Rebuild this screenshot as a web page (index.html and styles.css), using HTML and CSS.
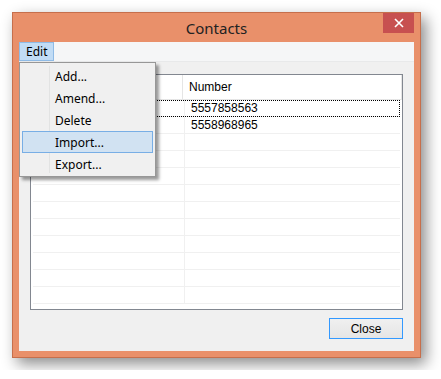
FILE: index.html
```html
<!DOCTYPE html>
<html lang="en">
<head>
  <meta charset="UTF-8" />
  <title>Contacts</title>
  <link rel="stylesheet" href="styles.css">
</head>
<body>

  <div class="window">
    <div class="titlebar">
      <span class="title">Contacts</span>
      <button class="close-btn">
        <svg width="10" height="10" viewBox="0 0 10 10"><path d="M1 1 L9 9 M9 1 L1 9" stroke="#fff" stroke-width="1.6"/></svg>
      </button>
    </div>

    <div class="client">
      <div class="menubar">
        <span class="menu-item open">Edit</span>
      </div>

      <div class="content">
        <div class="listview">
          <div class="lv-header">
            <div class="col col-name"></div>
            <div class="col col-number">Number</div>
          </div>
          <div class="lv-rows">
            <div class="row focused"><div class="col col-name"></div><div class="col col-number">5557858563</div></div>
            <div class="row"><div class="col col-name"></div><div class="col col-number">5558968965</div></div>
            <div class="row"><div class="col col-name"></div><div class="col col-number"></div></div>
            <div class="row"><div class="col col-name"></div><div class="col col-number"></div></div>
            <div class="row"><div class="col col-name"></div><div class="col col-number"></div></div>
            <div class="row"><div class="col col-name"></div><div class="col col-number"></div></div>
            <div class="row"><div class="col col-name"></div><div class="col col-number"></div></div>
            <div class="row"><div class="col col-name"></div><div class="col col-number"></div></div>
            <div class="row"><div class="col col-name"></div><div class="col col-number"></div></div>
            <div class="row"><div class="col col-name"></div><div class="col col-number"></div></div>
            <div class="row"><div class="col col-name"></div><div class="col col-number"></div></div>
            <div class="row"><div class="col col-name"></div><div class="col col-number"></div></div>
          </div>
        </div>

        <div class="buttons">
          <button class="btn default">Close</button>
        </div>
      </div>

      <!-- dropdown of the Edit menu -->
      <div class="dropdown">
        <div class="dd-item">Add...</div>
        <div class="dd-item">Amend...</div>
        <div class="dd-item">Delete</div>
        <div class="dd-item hot">Import...</div>
        <div class="dd-item">Export...</div>
      </div>
    </div>
  </div>

</body>
</html>
```

FILE: styles.css
```css
body {
  margin: 0;
  padding: 12px;
  background-color: #ffffff;
  font-family: 'Noto Sans', sans-serif;
}

.window {
  width: 409px;
  height: 346px;
  box-sizing: border-box;
  border: 1px solid #c66f4c;
  background-color: #e9906a;
  box-shadow: 5px 6px 14px rgba(0, 0, 0, 0.45);
  display: flex;
  flex-direction: column;
  padding: 0 6px 6px 6px;
}

.titlebar {
  height: 29px;
  position: relative;
  display: flex;
  align-items: center;
  justify-content: center;
}

.title {
  font-size: 15px;
  color: #222;
  margin-top: 1px;
}

.close-btn {
  position: absolute;
  top: 0;
  right: 0;
  width: 31px;
  height: 20px;
  border: none;
  padding: 0;
  background-color: #c75050;
  display: flex;
  align-items: center;
  justify-content: center;
}

.client {
  flex: 1;
  position: relative;
  background-color: #f0f0f0;
  display: flex;
  flex-direction: column;
}

.menubar {
  height: 20px;
  background-color: #f5f6f7;
  border-bottom: 1px solid #e8e9ea;
  box-sizing: border-box;
  display: flex;
}

.menu-item {
  font-size: 12px;
  line-height: 18px;
  padding: 0 6px;
  color: #000;
  border: 1px solid transparent;
}

.menu-item.open {
  background-color: #c1dcf5;
  border-color: #8fbbe6;
}

.content {
  flex: 1;
  display: flex;
  flex-direction: column;
  padding: 12px 11px 12px 11px;
}

.listview {
  height: 236px;
  box-sizing: border-box;
  border: 1px solid #828790;
  background-color: #ffffff;
  font-family: 'Liberation Sans', sans-serif;
  font-size: 12px;
  overflow: hidden;
}

.lv-header {
  display: flex;
  height: 24px;
  border-bottom: 1px solid #e5e5e5;
}

.lv-header .col {
  line-height: 24px;
  border-right: 1px solid #e5e5e5;
}

.col-name {
  width: 151px;
  flex-shrink: 0;
  border-right: 1px solid #f0f0f0;
}

.col-number {
  flex: 1;
  padding-left: 6px;
  color: #000;
}

.lv-rows {
  padding: 0 2px;
}

.row {
  display: flex;
  height: 17px;
  line-height: 17px;
  border-bottom: 1px solid #f0f0f0;
  box-sizing: border-box;
}

.row.focused {
  outline: 1px dotted #000;
  outline-offset: -1px;
}

.buttons {
  display: flex;
  justify-content: flex-end;
  margin-top: 8px;
}

.btn {
  width: 74px;
  height: 21px;
  font-family: 'Liberation Sans', sans-serif;
  font-size: 12px;
  color: #000;
  background: linear-gradient(#f0f0f0, #e5e5e5);
  border: 1px solid #adadad;
  padding: 0;
}

.btn.default {
  border-color: #3399ff;
}

.dropdown {
  position: absolute;
  top: 20px;
  left: 0;
  width: 137px;
  height: 115px;
  box-sizing: border-box;
  background-color: #f0f0f0;
  border: 1px solid #979797;
  box-shadow: 3px 3px 3px rgba(0, 0, 0, 0.4);
  padding: 2px;
  background-image: linear-gradient(#e2e3e3, #e2e3e3);
  background-size: 1px calc(100% - 6px);
  background-position: 29px 3px;
  background-repeat: no-repeat;
}

.dd-item {
  height: 22px;
  line-height: 22px;
  font-size: 12px;
  color: #000;
  padding-left: 32px;
  box-sizing: border-box;
  border: 1px solid transparent;
}

.dd-item.hot {
  background-color: #d1e2f2;
  border-color: #78aee5;
}
```
